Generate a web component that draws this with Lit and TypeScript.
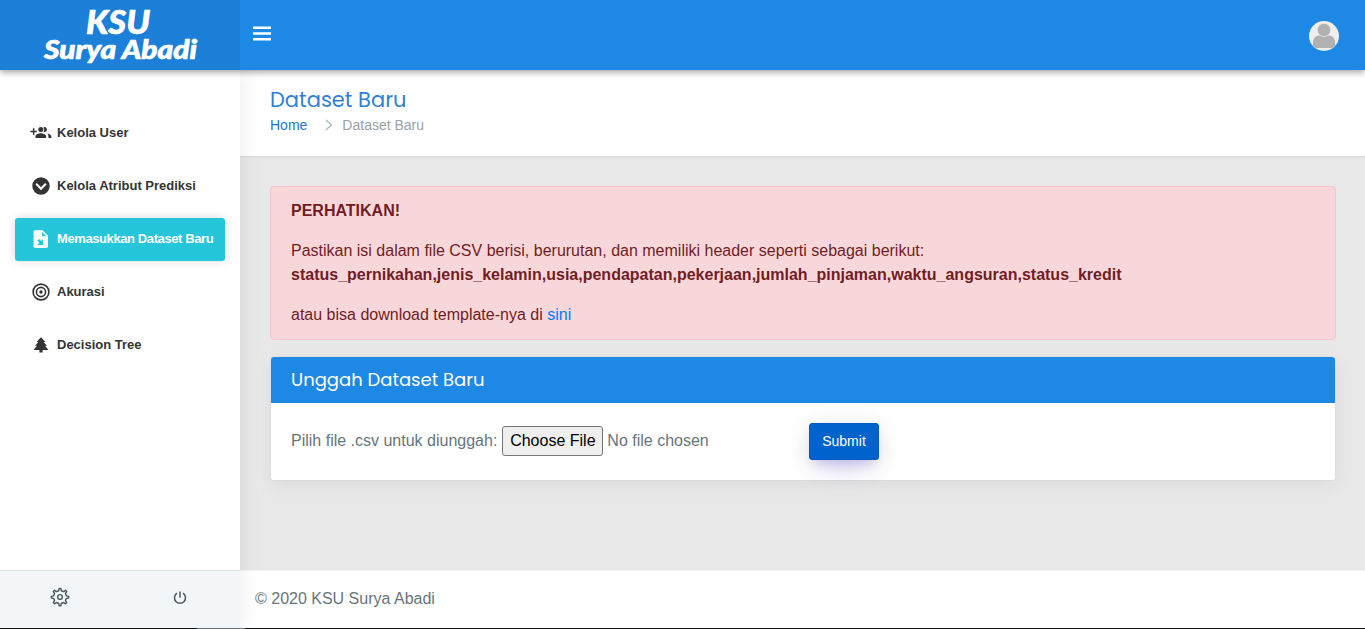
import { LitElement, html, css, svg } from "lit";
import { customElement } from "lit/decorators.js";
import { classMap } from "lit/directives/class-map.js";

const icons = {
  users: svg`<circle cx="10.800" cy="7.600" r="2.500"/><path d="M14.400 10.100a2.500 2.500 0 1 0 0-5c-.4 0-.6.1-.9.200a4.500 4.500 0 0 1 0 4.600c.3.1.5.200.9.200zM10.800 11.200c-2 0-5.300 1-5.300 2.900V16h10.600v-1.900c0-1.900-3.300-2.900-5.300-2.900zM17.100 11.400c.9.700 1.300 1.600 1.300 2.700V16h2.900v-1.900c0-1.500-2.100-2.400-4.200-2.700zM4.400 8.700V6.300H2.900v2.400H.4v1.500h2.500v2.500h1.500v-2.500h2.400V8.700z"/>`,
  chevron: svg`<path fill-rule="evenodd" d="M11 2.300a8.700 8.700 0 1 1 0 17.400 8.700 8.700 0 0 1 0-17.400zM6.900 8.100 5.400 9.600 11 15.200l5.600-5.600-1.500-1.500-4.100 4.100z"/>`,
  file: svg`<path fill-rule="evenodd" d="M5.200 2.200h7.300l5.500 5.500v10.600c0 .9-.7 1.600-1.600 1.600H5.200c-.9 0-1.600-.7-1.600-1.600V3.800c0-.9.700-1.600 1.600-1.600zM12 3.900v4.400h4.400zM13 17v-5.700l-1.700 1.700-2-2L7.500 12.800l2 2L7.300 17z"/>`,
  target: svg`<g fill="none" stroke="currentColor" stroke-width="1.600"><circle cx="11" cy="11" r="7.900"/><circle cx="11" cy="11" r="4.600"/></g><circle cx="11" cy="11" r="1.700"/>`,
  tree: svg`<path d="M11 3.300 6.500 8h1.900L5 11.800h2L3.500 16h5.900v2.600h3.200V16h5.900L15 11.800h2L13.600 8h1.900z"/>`,
};

const menu = [
  { label: "Kelola User", icon: icons.users, active: false },
  { label: "Kelola Atribut Prediksi", icon: icons.chevron, active: false },
  { label: "Memasukkan Dataset Baru", icon: icons.file, active: true },
  { label: "Akurasi", icon: icons.target, active: false },
  { label: "Decision Tree", icon: icons.tree, active: false },
];

@customElement("app-root")
export class AppRoot extends LitElement {
  static styles = css`
    :host {
      display: grid;
      grid-template-columns: 240px minmax(0, 1fr);
      grid-template-rows: 70px minmax(0, 1fr) 1px;
      height: 629px;
      overflow: hidden;
      background: #fff;
      color: #67757c;
      font: 16px/24px "Liberation Sans", Arial, sans-serif;
    }
    * { box-sizing: border-box; }
    a { color: #007bff; text-decoration: none; }
    .topbar {
      grid-column: 1 / -1;
      display: flex;
      z-index: 3;
      background: #1e88e5;
      box-shadow: 0 2px 7px rgba(0, 0, 0, 0.4);
    }
    .brand { width: 240px; background: #1c80d8; }
    .brand svg { display: block; }
    .brand text {
      font-family: "Brush Script MT", Lato, sans-serif;
      font-style: italic;
      font-weight: 900;
      fill: #fff;
      stroke: #fff;
      stroke-width: 0.7;
      stroke-linejoin: round;
    }
    .bar {
      flex: 1;
      display: flex;
      justify-content: space-between;
      align-items: center;
      padding: 2px 26px 0 13px;
    }
    .burger { margin-top: -6px; }
    .sidebar {
      z-index: 2;
      display: flex;
      flex-direction: column;
      background: #fff;
      box-shadow: 1px 0 20px rgba(0, 0, 0, 0.08);
    }
    .nav {
      flex: 1;
      display: flex;
      flex-direction: column;
      gap: 10px;
      padding: 42px 15px 0;
    }
    .item {
      display: flex;
      align-items: center;
      height: 43px;
      gap: 5.5px;
      padding: 0 0 0 14.5px;
      border-radius: 3px;
      color: #343434;
      font-size: 13px;
      font-weight: 700;
      white-space: nowrap;
    }
    .item svg { flex: none; fill: currentColor; margin-top: -1px; }
    .item span { margin-top: -2px; }
    .item.active {
      background: #26c6da;
      color: #fff;
      letter-spacing: -0.4px;
      box-shadow: 0 0 8px rgba(0, 0, 0, 0.16);
    }
    .tools {
      display: grid;
      grid-template-columns: 1fr 1fr;
      justify-items: center;
      height: 58px;
      padding-top: 16px;
      background: #f2f6f8;
      border-top: 1px solid #dbe4e6;
      color: #4c5b60;
    }
    .main {
      display: flex;
      flex-direction: column;
      background: #e8e8e8;
    }
    .title {
      height: 86px;
      padding: 17px 30px 0;
      background: #fff;
      box-shadow: 0 1px 2px rgba(0, 0, 0, 0.08);
    }
    h3, h4, p { margin: 0; font-weight: 400; }
    h3 {
      color: #2f7fd6;
      font: 400 21px/26px Poppins, Inter, sans-serif;
    }
    .crumbs {
      display: flex;
      align-items: center;
      font-size: 14px;
      line-height: 24px;
      color: #99abb4;
    }
    .crumbs svg { margin: 0 9px 0 18px; }
    .crumbs .here { color: #99a2a8; }
    .crumbs a { color: #1976d2; }
    .content { flex: 1; padding: 30px 29px 0 30px; }
    .alert {
      display: flex;
      flex-direction: column;
      gap: 16px;
      padding: 12px 20px;
      border: 1px solid #f5c6cb;
      border-radius: 4px;
      background: #f8d7da;
      color: #721c24;
    }
    .card {
      margin-top: 16px;
      border: 1px solid rgba(0, 0, 0, 0.02);
      border-radius: 4px;
      background: #fff;
      background-clip: padding-box;
      box-shadow: 0 5px 20px rgba(0, 0, 0, 0.05);
    }
    h4 {
      height: 46px;
      padding: 0 20px;
      background: #1e88e5;
      border-radius: 3px 3px 0 0;
      color: #fff;
      font: 400 18px/46px Poppins, Inter, sans-serif;
    }
    .form { display: flex; height: 77px; padding: 20px 20px 0; }
    .picker { display: flex; width: 518px; height: 34px; align-items: center; margin-top: 1px; }
    .choose {
      height: 30px;
      width: 101px;
      padding: 0;
      margin: 0 4px 0 5px;
      border: 1px solid #767676;
      border-radius: 3px;
      background: #efefef;
      color: #000;
      font: inherit;
    }
    .submit {
      width: 70px;
      height: 37px;
      padding: 0;
      border: 1px solid #005cbf;
      border-radius: 3px;
      background: #0062cc;
      color: #fff;
      font: 14px/21px "Liberation Sans", Arial, sans-serif;
      box-shadow: 0 14px 26px -12px rgba(116, 96, 238, 0.42),
        0 4px 23px 0 rgba(0, 0, 0, 0.12), 0 8px 10px -5px rgba(116, 96, 238, 0.2);
    }
    .footer {
      height: 58px;
      padding: 16px 15px;
      background: #fff;
      border-top: 1px solid #f4f4f4;
    }
    .edge {
      grid-column: 1 / -1;
      z-index: 4;
      background: linear-gradient(90deg, #15181a 197px, #656b6e 197px, #656b6e 245px, #15181a 245px);
    }
  `;

  render() {
    return html`
      <header class="topbar">
        <div class="brand">
          <svg width="240" height="70">
            <text x="86" y="33.500" font-size="33" textLength="64" lengthAdjust="spacingAndGlyphs">KSU</text>
            <text x="44" y="59" font-size="26" textLength="153" lengthAdjust="spacingAndGlyphs">Surya Abadi</text>
          </svg>
        </div>
        <div class="bar">
          <svg class="burger" width="18" height="15" fill="#fff">
            <path d="M0 .5h18v2.500H0zM0 6.300h18v2.500H0zM0 12h18v2.500H0z" />
          </svg>
          <svg width="30" height="30" viewBox="0 0 30 30">
            <circle cx="15" cy="15" r="15" fill="#eee" />
            <path d="M4 25v-3c0-4.500 2.500-7.500 6-7.500h10c3.500 0 6 3 6 7.500v3l-2.500 2h-17z" fill="#b1b1b1" />
            <circle cx="15" cy="9" r="6.600" fill="#b1b1b1" stroke="#e6e6e6" stroke-width=".8" />
          </svg>
        </div>
      </header>
      <aside class="sidebar">
        <nav class="nav">
          ${menu.map(
            (m) => html`<a class=${classMap({ item: true, active: m.active })}>
              <svg width="22" height="22" viewBox="0 0 22 22">${m.icon}</svg><span>${m.label}</span>
            </a>`
          )}
        </nav>
        <div class="tools">
          <svg width="20" height="20" viewBox="-.5 -.500 21 21" fill="none" stroke="currentColor" stroke-width="1.500" stroke-linejoin="round">
            <path d="M8.700 3.400 9.100 1h1.800l.4 2.400 2.500 1 2-1.400 1.300 1.300-1.400 2 1 2.500 2.400.4v1.800l-2.400.4-1 2.500 1.400 2-1.300 1.300-2-1.400-2.500 1-.4 2.400H9.100l-.4-2.400-2.500-1-2 1.400-1.300-1.300 1.400-2-1-2.500L.9 11V9.200l2.400-.4 1-2.500-1.400-2L4.200 3l2 1.400z" />
            <circle cx="10" cy="10" r="2.500" />
          </svg>
          <svg width="16" height="20" viewBox="0 0 16 20" fill="none" stroke="currentColor" stroke-width="1.500">
            <path d="M5 6.200a5.500 5.500 0 1 0 6 0M8 4.500v6.300" />
          </svg>
        </div>
      </aside>
      <main class="main">
        <section class="title">
          <h3>Dataset Baru</h3>
          <div class="crumbs">
            <a>Home</a>
            <svg width="8" height="12" fill="none" stroke="#a6b7bf" stroke-width="1.200"><path d="m1 1 5.500 5L1 11" /></svg>
            <span class="here">Dataset Baru</span>
          </div>
        </section>
        <section class="content">
          <div class="alert">
            <b>PERHATIKAN!</b>
            <p>
              Pastikan isi dalam file CSV berisi, berurutan, dan memiliki header seperti sebagai berikut:<br />
              <b>status_pernikahan,jenis_kelamin,usia,pendapatan,pekerjaan,jumlah_pinjaman,waktu_angsuran,status_kredit</b>
            </p>
            <p>atau bisa download template-nya di <a>sini</a></p>
          </div>
          <div class="card">
            <h4>Unggah Dataset Baru</h4>
            <div class="form">
              <div class="picker">
                <span>Pilih file .csv untuk diunggah:</span>
                <button class="choose">Choose File</button>
                <span>No file chosen</span>
              </div>
              <button class="submit">Submit</button>
            </div>
          </div>
        </section>
        <footer class="footer">© 2020 KSU Surya Abadi</footer>
      </main>
      <div class="edge"></div>
    `;
  }
}
